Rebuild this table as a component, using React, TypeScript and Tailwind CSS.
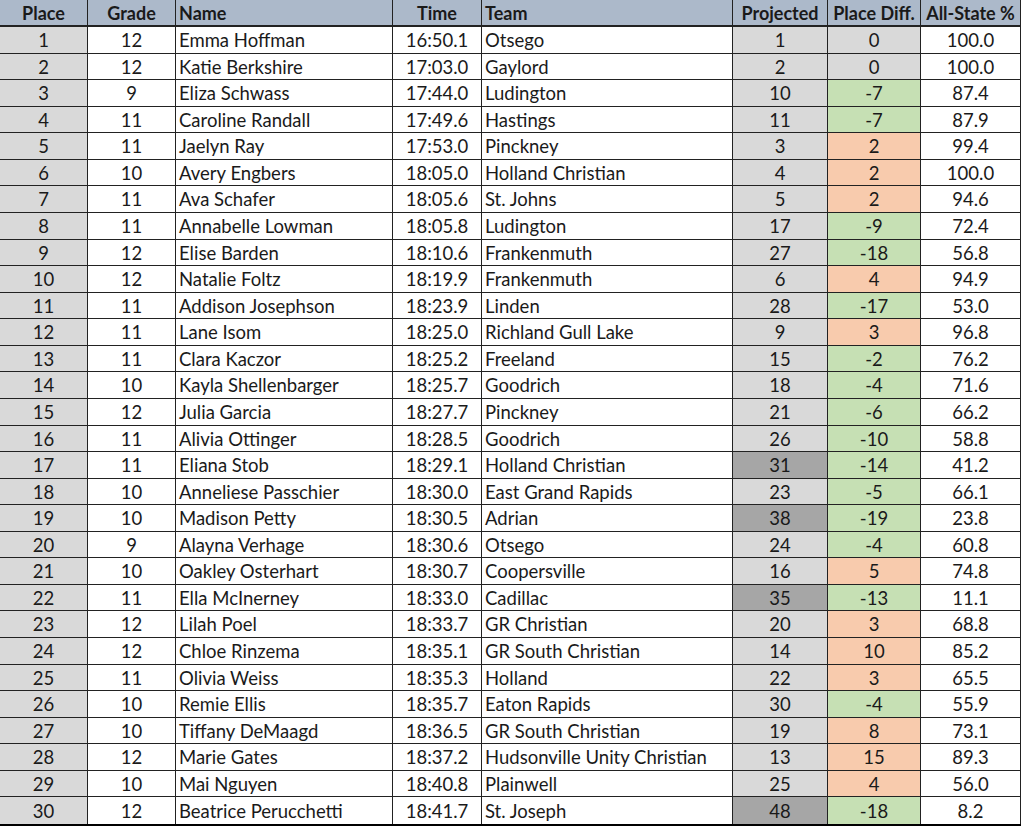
const rows: [number, number, string, string, string, number, number, string][] = [
  [1, 12, 'Emma Hoffman', '16:50.1', 'Otsego', 1, 0, '100.0'],
  [2, 12, 'Katie Berkshire', '17:03.0', 'Gaylord', 2, 0, '100.0'],
  [3, 9, 'Eliza Schwass', '17:44.0', 'Ludington', 10, -7, '87.4'],
  [4, 11, 'Caroline Randall', '17:49.6', 'Hastings', 11, -7, '87.9'],
  [5, 11, 'Jaelyn Ray', '17:53.0', 'Pinckney', 3, 2, '99.4'],
  [6, 10, 'Avery Engbers', '18:05.0', 'Holland Christian', 4, 2, '100.0'],
  [7, 11, 'Ava Schafer', '18:05.6', 'St. Johns', 5, 2, '94.6'],
  [8, 11, 'Annabelle Lowman', '18:05.8', 'Ludington', 17, -9, '72.4'],
  [9, 12, 'Elise Barden', '18:10.6', 'Frankenmuth', 27, -18, '56.8'],
  [10, 12, 'Natalie Foltz', '18:19.9', 'Frankenmuth', 6, 4, '94.9'],
  [11, 11, 'Addison Josephson', '18:23.9', 'Linden', 28, -17, '53.0'],
  [12, 11, 'Lane Isom', '18:25.0', 'Richland Gull Lake', 9, 3, '96.8'],
  [13, 11, 'Clara Kaczor', '18:25.2', 'Freeland', 15, -2, '76.2'],
  [14, 10, 'Kayla Shellenbarger', '18:25.7', 'Goodrich', 18, -4, '71.6'],
  [15, 12, 'Julia Garcia', '18:27.7', 'Pinckney', 21, -6, '66.2'],
  [16, 11, 'Alivia Ottinger', '18:28.5', 'Goodrich', 26, -10, '58.8'],
  [17, 11, 'Eliana Stob', '18:29.1', 'Holland Christian', 31, -14, '41.2'],
  [18, 10, 'Anneliese Passchier', '18:30.0', 'East Grand Rapids', 23, -5, '66.1'],
  [19, 10, 'Madison Petty', '18:30.5', 'Adrian', 38, -19, '23.8'],
  [20, 9, 'Alayna Verhage', '18:30.6', 'Otsego', 24, -4, '60.8'],
  [21, 10, 'Oakley Osterhart', '18:30.7', 'Coopersville', 16, 5, '74.8'],
  [22, 11, 'Ella McInerney', '18:33.0', 'Cadillac', 35, -13, '11.1'],
  [23, 12, 'Lilah Poel', '18:33.7', 'GR Christian', 20, 3, '68.8'],
  [24, 12, 'Chloe Rinzema', '18:35.1', 'GR South Christian', 14, 10, '85.2'],
  [25, 11, 'Olivia Weiss', '18:35.3', 'Holland', 22, 3, '65.5'],
  [26, 10, 'Remie Ellis', '18:35.7', 'Eaton Rapids', 30, -4, '55.9'],
  [27, 10, 'Tiffany DeMaagd', '18:36.5', 'GR South Christian', 19, 8, '73.1'],
  [28, 12, 'Marie Gates', '18:37.2', 'Hudsonville Unity Christian', 13, 15, '89.3'],
  [29, 10, 'Mai Nguyen', '18:40.8', 'Plainwell', 25, 4, '56.0'],
  [30, 12, 'Beatrice Perucchetti', '18:41.7', 'St. Joseph', 48, -18, '8.2'],
];

const headers = ['Place', 'Grade', 'Name', 'Time', 'Team', 'Projected', 'Place Diff.', 'All-State %'];

export default function App() {
  return (
    <div className="w-[1024px] h-[826px] bg-white text-[#1a1a1a] font-['Lato','Open_Sans',sans-serif] text-[18.5px] leading-none">
      <div className="grid grid-cols-[88px_88px_217px_89px_251px_95px_93px_100px] grid-rows-[27px_repeat(30,minmax(0,1fr))] h-[826px] w-[1021px] border-b-2 border-black">
        {headers.map((h, i) => (
          <div
            key={h}
            className={`bg-[#acb9ca] font-bold text-[18px] border-b-2 border-r border-[#222] flex items-center ${
              i === 2 || i === 4 ? 'justify-start pl-[3px]' : 'justify-center'
            }`}
          >
            {h}
          </div>
        ))}
        {rows.map((r, idx) => {
          const last = idx === rows.length - 1;
          const rb = last ? 'border-r border-[#222]' : 'border-r border-b border-[#222]';
          const [place, grade, name, time, team, proj, diff, pct] = r;
          const diffBg = diff === 0 ? 'bg-[#d9d9d9]' : diff < 0 ? 'bg-[#c6e0b4]' : 'bg-[#f8cbad]';
          const projBg = proj > 30 ? 'bg-[#a6a6a6]' : 'bg-[#d9d9d9]';
          return [
            <div key={`a${idx}`} className={`${rb} bg-[#d9d9d9] flex items-center justify-center pt-px`}>{place}</div>,
            <div key={`b${idx}`} className={`${rb} flex items-center justify-center pt-px`}>{grade}</div>,
            <div key={`c${idx}`} className={`${rb} flex items-center pl-[3px] pt-px`}>{name}</div>,
            <div key={`d${idx}`} className={`${rb} flex items-center justify-center pt-px`}>{time}</div>,
            <div key={`e${idx}`} className={`${rb} flex items-center pl-[3px] pt-px`}>{team}</div>,
            <div key={`f${idx}`} className={`${rb} ${projBg} flex items-center justify-center pt-px`}>{proj}</div>,
            <div key={`g${idx}`} className={`${rb} ${diffBg} flex items-center justify-center pt-px`}>{diff}</div>,
            <div key={`h${idx}`} className={`${rb} flex items-center justify-center pt-px`}>{pct}</div>,
          ];
        })}
      </div>
    </div>
  );
}
